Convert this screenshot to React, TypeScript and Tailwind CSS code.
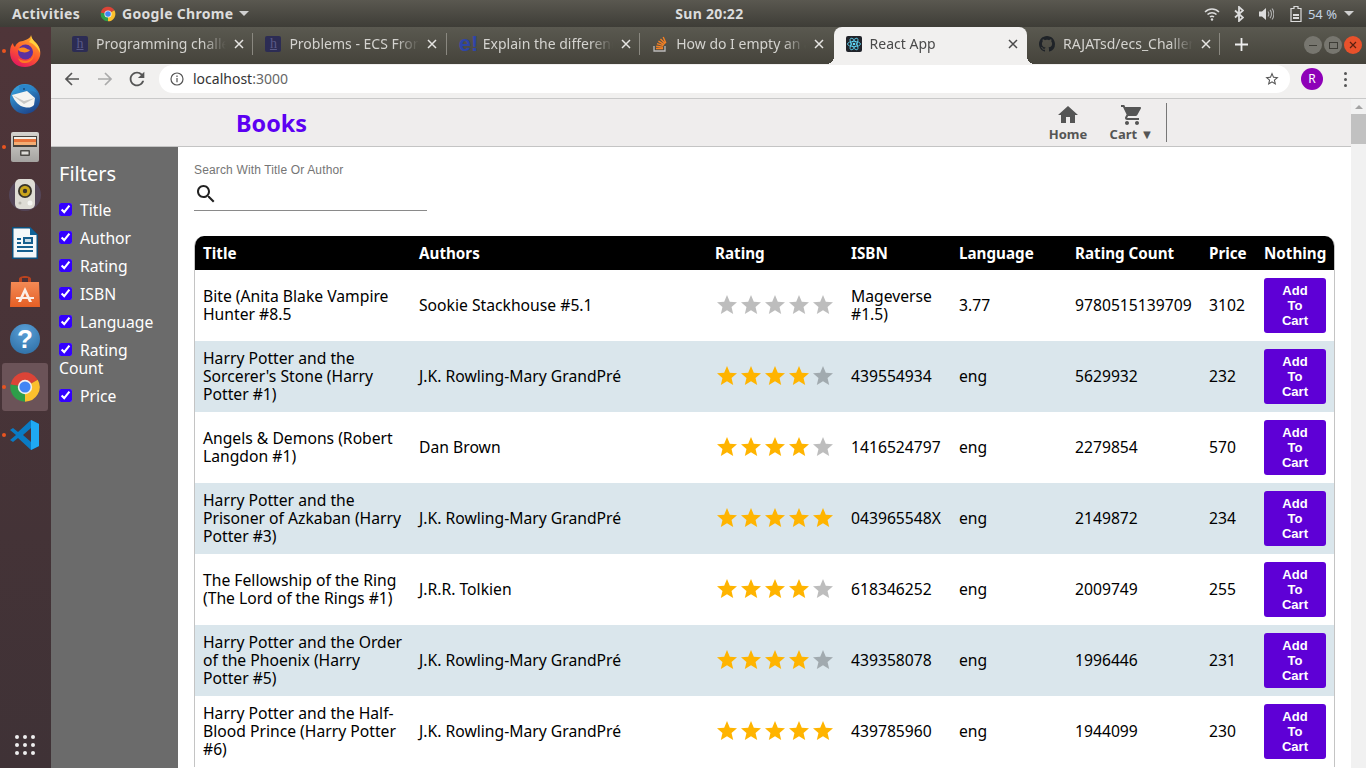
import type { ReactNode } from "react";

const STAR = "M12 17.27L18.18 21l-1.64-7.03L22 9.24l-7.19-.61L12 2 9.19 8.63 2 9.24l5.46 4.73L5.82 21z";
const COLS = "grid grid-cols-[216px_296px_136px_108px_116px_134px_55px_78px]";

const books = [
  { title: "Bite (Anita Blake Vampire Hunter #8.5", authors: "Sookie Stackhouse #5.1", stars: 0, isbn: "Mageverse #1.5)", lang: "3.77", count: "9780515139709", price: "3102" },
  { title: "Harry Potter and the Sorcerer's Stone (Harry Potter #1)", authors: "J.K. Rowling-Mary GrandPré", stars: 4, isbn: "439554934", lang: "eng", count: "5629932", price: "232" },
  { title: "Angels & Demons (Robert Langdon #1)", authors: "Dan Brown", stars: 4, isbn: "1416524797", lang: "eng", count: "2279854", price: "570" },
  { title: "Harry Potter and the Prisoner of Azkaban (Harry Potter #3)", authors: "J.K. Rowling-Mary GrandPré", stars: 5, isbn: "043965548X", lang: "eng", count: "2149872", price: "234" },
  { title: "The Fellowship of the Ring (The Lord of the Rings #1)", authors: "J.R.R. Tolkien", stars: 4, isbn: "618346252", lang: "eng", count: "2009749", price: "255" },
  { title: "Harry Potter and the Order of the Phoenix (Harry Potter #5)", authors: "J.K. Rowling-Mary GrandPré", stars: 4, isbn: "439358078", lang: "eng", count: "1996446", price: "231" },
  { title: "Harry Potter and the Half-Blood Prince (Harry Potter #6)", authors: "J.K. Rowling-Mary GrandPré", stars: 5, isbn: "439785960", lang: "eng", count: "1944099", price: "230" },
];

const filters = ["Title", "Author", "Rating", "ISBN", "Language", "Rating Count", "Price"];
const headers = ["Title", "Authors", "Rating", "ISBN", "Language", "Rating Count", "Price", "Nothing"];

// ── Logos ────────────────────────────────────────────────────────────

function ChromeLogo({ size }: { size: number }) {
  return (
    <svg width={size} height={size} viewBox="0 0 24 24">
      <path d="M12 12L1.17 10.09A11 11 0 0 1 21.53 6.5z" fill="#db4437" />
      <path d="M12 12L21.53 6.5A11 11 0 0 1 12 23z" fill="#fbc02d" />
      <path d="M12 12L12 23A11 11 0 0 1 1.17 10.09z" fill="#2e9e49" />
      <circle cx="12" cy="12" r="5.4" fill="#f1f1f1" />
      <circle cx="12" cy="12" r="4.2" fill="#4285f4" />
    </svg>
  );
}

function Firefox() {
  return (
    <svg width="32" height="32" viewBox="0 0 32 32">
      <defs>
        <linearGradient id="ffBody" x1="0.8" y1="0" x2="0.3" y2="1">
          <stop offset="0" stopColor="#ffb52e" />
          <stop offset="0.55" stopColor="#ff5a2c" />
          <stop offset="1" stopColor="#e3175f" />
        </linearGradient>
      </defs>
      <path d="M22 0c0 3 2 5 5 8 4 4 5 9 4 13-2 7-8 11-15 11C7 32 1 26 1 17c0-4 1-7 3-9 0 2 1 3 2 4 1-3 4-6 8-6 3-1 8-3 8-6z" fill="url(#ffBody)" />
      <path d="M22 0c0 3 2 5 5 8 3 3 4 7 4 10-2-5-6-9-11-11 2-2 2-4 2-7z" fill="#ffd23d" />
      <circle cx="16.5" cy="17" r="7.5" fill="#5d2fa0" />
      <path d="M9 14c3-2 7-2 9 0l3 1c-1 2-5 3-8 2-2 0-3-1-4-3z" fill="#ff8a1f" />
      <path d="M9 23c3 3 9 4 13 1 2-2 3-4 3-7 1 6-4 12-10 11-3 0-5-2-6-5z" fill="#ff7a22" />
    </svg>
  );
}

function Thunderbird() {
  return (
    <svg width="32" height="32" viewBox="0 0 32 32">
      <defs>
        <linearGradient id="tbBody" x1="0.2" y1="0" x2="0.8" y2="1">
          <stop offset="0" stopColor="#38a4e0" />
          <stop offset="1" stopColor="#1b3f86" />
        </linearGradient>
      </defs>
      <circle cx="16" cy="16" r="15" fill="url(#tbBody)" />
      <path d="M10 3c6-3 14 0 18 7-5-3-10-3-15-1-2 0-3-3-3-6z" fill="#2a85c9" />
      <path d="M3 12l15-4 8 7-1 7c-3 3-6 3-10 2-5-1-9-5-12-12z" fill="#f4f4f2" />
      <path d="M3 12l12 6 11-3-11 6z" fill="#c8c8c6" />
      <circle cx="15" cy="6" r="0.8" fill="#10203c" />
    </svg>
  );
}

function Files() {
  return (
    <svg width="28" height="30" viewBox="0 0 28 30">
      <defs>
        <linearGradient id="fileBox" x1="0" y1="0" x2="0" y2="1">
          <stop offset="0" stopColor="#d5d3cf" />
          <stop offset="1" stopColor="#a5a3a0" />
        </linearGradient>
      </defs>
      <rect x="0" y="0" width="28" height="30" rx="2" fill="url(#fileBox)" />
      <rect x="2" y="4" width="24" height="11" fill="#46423d" />
      <rect x="3" y="5" width="22" height="2" fill="#f2efe8" />
      <rect x="3" y="7" width="22" height="3" fill="#e7733a" />
      <rect x="3" y="10" width="22" height="3" fill="#f3ad74" />
      <rect x="9" y="18" width="10" height="6" rx="1" fill="#4e4b46" />
      <rect x="10.5" y="19.5" width="7" height="3" fill="#dddbd6" />
    </svg>
  );
}

function Rhythmbox() {
  return (
    <svg width="34" height="34" viewBox="0 0 34 34">
      <circle cx="17" cy="17" r="16" fill="#5f5a80" opacity="0.45" />
      <rect x="7" y="1" width="20" height="30" rx="5" fill="#dedcd5" />
      <circle cx="17" cy="13" r="7" fill="#38342c" />
      <circle cx="17" cy="13" r="5.2" fill="#c9a51c" />
      <circle cx="17" cy="13" r="2.2" fill="#38342c" />
      <circle cx="22" cy="25" r="2.5" fill="#f5f5f2" />
      <circle cx="12" cy="25" r="1.5" fill="#b8b6ae" />
    </svg>
  );
}

function Writer() {
  return (
    <svg width="26" height="32" viewBox="0 0 26 32">
      <path d="M0 0h18l8 8v24H0z" fill="#0b4f7c" />
      <path d="M1.5 1.5h16l7 7v22h-23z" fill="#f4f7f9" />
      <path d="M18 0l8 8h-8z" fill="#0f6298" />
      <path d="M5 11h4v2H5zM5 15h4v2H5zM5 19h16v2H5zM5 23h16v2H5z" fill="#155f8f" />
      <rect x="11" y="10" width="10" height="7" fill="#155f8f" />
      <rect x="13" y="12" width="6" height="3" fill="#c9dbe6" />
    </svg>
  );
}

function Software() {
  return (
    <svg width="30" height="32" viewBox="0 0 30 32">
      <defs>
        <linearGradient id="bag" x1="0" y1="0" x2="0" y2="1">
          <stop offset="0" stopColor="#f38a55" />
          <stop offset="1" stopColor="#e55f25" />
        </linearGradient>
      </defs>
      <path d="M9 8V4c0-4 12-4 12 0v4" fill="#b9431f" />
      <rect x="12" y="3" width="6" height="5" fill="#4a3238" />
      <path d="M1 7h28l1 25H0z" fill="url(#bag)" />
      <path d="M15 12l7 15h-3l-4-9-4 9H8z" fill="#fbeee6" />
      <rect x="6" y="22" width="18" height="2" fill="#fbeee6" />
    </svg>
  );
}

function Help() {
  return (
    <div className="flex h-[30px] w-[30px] items-center justify-center rounded-full bg-[radial-gradient(circle_at_50%_25%,#5aa0d8,#2a6aa0)] font-['Liberation_Sans',sans-serif] text-[26px] leading-none font-bold text-white">
      ?
    </div>
  );
}

function VSCode() {
  return (
    <svg width="30" height="32" viewBox="0 0 30 32">
      <path d="M21 1l8 4v22l-8 4L8 19l-5 4-3-2 6-5-6-5 3-2 5 4z" fill="#0a7bc4" />
      <path d="M21 9l-8 7 8 7z" fill="#4a3238" />
      <path d="M21 1l8 4v22l-8 4z" fill="#1fa9f2" />
    </svg>
  );
}

function ReactFavicon() {
  return (
    <svg width="16" height="16" viewBox="0 0 16 16">
      <rect width="16" height="16" rx="2" fill="#20232a" />
      <g fill="none" stroke="#61dafb" strokeWidth="0.8">
        <ellipse cx="8" cy="8" rx="6.5" ry="2.6" />
        <ellipse cx="8" cy="8" rx="6.5" ry="2.6" transform="rotate(60 8 8)" />
        <ellipse cx="8" cy="8" rx="6.5" ry="2.6" transform="rotate(120 8 8)" />
      </g>
      <circle cx="8" cy="8" r="1.3" fill="#61dafb" />
    </svg>
  );
}

function GithubFavicon() {
  return (
    <svg width="16" height="16" viewBox="0 0 16 16" fill="#1f2328">
      <path d="M8 0C3.58 0 0 3.58 0 8c0 3.54 2.29 6.53 5.47 7.59.4.07.55-.17.55-.38 0-.19-.01-.82-.01-1.49-2.01.37-2.53-.49-2.69-.94-.09-.23-.48-.94-.82-1.13-.28-.15-.68-.52-.01-.53.63-.01 1.08.58 1.23.82.72 1.21 1.87.87 2.33.66.07-.52.28-.87.51-1.07-1.78-.2-3.64-.89-3.64-3.95 0-.87.31-1.59.82-2.15-.08-.2-.36-1.02.08-2.12 0 0 .67-.21 2.2.82.64-.18 1.32-.27 2-.27s1.36.09 2 .27c1.53-1.04 2.2-.82 2.2-.82.44 1.1.16 1.92.08 2.12.51.56.82 1.27.82 2.15 0 3.07-1.87 3.75-3.65 3.95.29.25.54.73.54 1.48 0 1.07-.01 1.93-.01 2.2 0 .21.15.46.55.38A8.01 8.01 0 0 0 16 8c0-4.42-3.58-8-8-8z" />
    </svg>
  );
}

function StackFavicon() {
  return (
    <svg width="16" height="16" viewBox="0 0 16 16">
      <path d="M2 10v5h11v-5" fill="none" stroke="#bcbbbb" strokeWidth="1.3" />
      <path d="M4 12.5h7M4.2 10.2l6.8.9M5 7.7l6.5 2M6.4 5.2l5.8 3.4M8.5 3l4.8 4.8M11.2 1l2.6 6" fill="none" stroke="#f48024" strokeWidth="1.4" />
    </svg>
  );
}

function HackerFavicon() {
  return (
    <div className="flex h-4 w-4 items-center justify-center rounded-[2px] bg-[#2c2c54] font-['Liberation_Serif',serif] text-[14px] leading-none text-[#5a5a88] underline">
      h
    </div>
  );
}

function EduFavicon() {
  return <div className="w-4 font-['Liberation_Sans',sans-serif] text-[22px] leading-none font-bold whitespace-nowrap text-[#2e45a8]">e!</div>;
}

// ── Desktop chrome ───────────────────────────────────────────────────

function TopBar() {
  return (
    <div className="flex h-[27px] shrink-0 items-center bg-gradient-to-b from-[#5a5850] to-[#3e3d37] text-[14px] font-bold text-[#dcdcdc]">
      <span className="ml-[12px] w-[88px] tracking-[0.3px]">Activities</span>
      <ChromeLogo size={16} />
      <span className="ml-[6px] tracking-[0.3px]">Google Chrome</span>
      <span className="ml-[6px] h-0 w-0 border-x-[5px] border-t-[5px] border-x-transparent border-t-[#d0d0d0]" />
      <span className="ml-[420px] w-[80px] text-center tracking-[0.3px]">Sun 20:22</span>
      <div className="ml-auto flex items-center text-[13px]">
        <svg width="16" height="14" viewBox="0 0 16 14" fill="none" stroke="#dcdcdc" strokeWidth="1.5">
          <path d="M1 5c4-4 10-4 14 0M3.5 7.5c2.5-2.5 6.5-2.5 9 0M6 10c1-1 3-1 4 0" />
          <circle cx="8" cy="12.5" r="1.2" fill="#dcdcdc" stroke="none" />
        </svg>
        <svg className="ml-[14px]" width="10" height="16" viewBox="0 0 10 16" fill="none" stroke="#dcdcdc" strokeWidth="1.8">
          <path d="M1 4.5l8 7-4 3.5V1l4 3.5-8 7" />
        </svg>
        <svg className="ml-[15px]" width="15" height="14" viewBox="0 0 15 14">
          <path d="M0 4.5h3L7 1v12L3 9.5H0z" fill="#dcdcdc" />
          <path d="M9 4.5c1 1.5 1 3.5 0 5M11 3c2 2 2 6 0 8M13 1.5c2.5 3 2.5 8 0 11" fill="none" stroke="#b0b0b0" strokeWidth="1.1" />
        </svg>
        <svg className="ml-[16px]" width="12" height="16" viewBox="0 0 12 16">
          <path d="M4 0.5h4v2h3v13H1v-13h3z" fill="none" stroke="#dcdcdc" strokeWidth="1.2" />
          <path d="M3 8h6v2H3zM3 11h6v2H3z" fill="#dcdcdc" />
        </svg>
        <span className="ml-[6px] font-normal text-[#c4d4e4]">54 %</span>
        <span className="mr-[12px] ml-[7px] h-0 w-0 border-x-[5px] border-t-[5px] border-x-transparent border-t-[#d0d0d0]" />
      </div>
    </div>
  );
}

function Dock() {
  const items: { icon: ReactNode; dot?: boolean; active?: boolean }[] = [
    { icon: <Firefox />, dot: true },
    { icon: <Thunderbird /> },
    { icon: <Files />, dot: true },
    { icon: <Rhythmbox /> },
    { icon: <Writer /> },
    { icon: <Software /> },
    { icon: <Help /> },
    { icon: <ChromeLogo size={32} />, dot: true, active: true },
    { icon: <VSCode />, dot: true },
  ];
  return (
    <div className="flex w-[51px] shrink-0 flex-col bg-gradient-to-b from-[#4f3539] to-[#3f3236]">
      {items.map((item, i) => (
        <div key={i} className={`relative mx-[2px] flex h-12 w-[46px] items-center justify-center rounded-[3px] ${item.active ? "bg-[#6b5358]" : ""}`}>
          {item.dot && <span className="absolute top-[22px] left-0 h-1 w-1 rounded-full bg-[#e95420]" />}
          {item.icon}
        </div>
      ))}
      <div className="mt-auto mb-[13px] ml-[15px] grid w-5 grid-cols-3 gap-x-1 gap-y-1">
        {Array.from({ length: 9 }).map((_, i) => (
          <span key={i} className="h-1 w-1 rounded-full bg-[#eeeeee]" />
        ))}
      </div>
    </div>
  );
}

function Tab({ icon, label, active, sep }: { icon: ReactNode; label: string; active?: boolean; sep?: boolean }) {
  return (
    <div className={`relative flex h-[37px] w-[193.4px] shrink-0 items-center pb-[3px] pl-[12px] text-[14px] ${active ? "rounded-t-[8px] bg-[#f1f0ef] text-[#4a4a4a]" : "text-[#d4d3cf]"}`}>
      {active && (
        <>
          <span className="absolute bottom-0 -left-[8px] h-2 w-2 bg-[radial-gradient(circle_at_0_0,transparent_8px,#f1f0ef_8px)]" />
          <span className="absolute -right-[8px] bottom-0 h-2 w-2 bg-[radial-gradient(circle_at_100%_0,transparent_8px,#f1f0ef_8px)]" />
        </>
      )}
      <span className="flex w-4 shrink-0 justify-center">{icon}</span>
      <span className="ml-2 w-[130px] overflow-hidden whitespace-nowrap [mask-image:linear-gradient(to_right,black_82%,transparent)]">{label}</span>
      <svg className="ml-[8px]" width="10" height="10" viewBox="0 0 10 10" stroke={active ? "#4a4a4a" : "#e6e5e2"} strokeWidth="1.5">
        <path d="M1 1l8 8M9 1l-8 8" />
      </svg>
      {sep && <span className="absolute top-[6px] right-0 h-[22px] w-px bg-[#8a8880]" />}
    </div>
  );
}

function TabStrip() {
  return (
    <div className="flex h-[37px] shrink-0 items-end bg-gradient-to-b from-[#5a5950] to-[#45433b] pl-[9px]">
      <Tab icon={<HackerFavicon />} label="Programming challenges" sep />
      <Tab icon={<HackerFavicon />} label="Problems - ECS Frontend" sep />
      <Tab icon={<EduFavicon />} label="Explain the difference" sep />
      <Tab icon={<StackFavicon />} label="How do I empty an array" />
      <Tab icon={<ReactFavicon />} label="React App" active />
      <Tab icon={<GithubFavicon />} label="RAJATsd/ecs_Challenge" sep />
      <svg className="mb-[13px] ml-[15px]" width="13" height="13" viewBox="0 0 13 13" stroke="#eeeeee" strokeWidth="1.8">
        <path d="M6.5 0v13M0 6.5h13" />
      </svg>
      <div className="mb-[10px] ml-[56px] flex gap-[2px]">
        <span className="flex h-[18px] w-[18px] items-center justify-center rounded-full bg-[#77766f]"><span className="h-px w-2 bg-[#3d3c36]" /></span>
        <span className="flex h-[18px] w-[18px] items-center justify-center rounded-full bg-[#77766f]"><span className="h-[7px] w-[9px] border border-[#3d3c36]" /></span>
        <span className="flex h-[18px] w-[18px] items-center justify-center rounded-full bg-[#e8512b]">
          <svg width="8" height="8" viewBox="0 0 8 8" stroke="#5a2010" strokeWidth="1.2"><path d="M1 1l6 6M7 1L1 7" /></svg>
        </span>
      </div>
    </div>
  );
}

function Toolbar() {
  return (
    <div className="flex h-[35px] shrink-0 items-center border-b border-[#c9c9c9] bg-[#f1f0ef] pb-1">
      <svg className="ml-[13px]" width="16" height="16" viewBox="0 0 16 16" fill="none" stroke="#555" strokeWidth="1.7">
        <path d="M15 8H2M8 2L2 8l6 6" />
      </svg>
      <svg className="ml-[17px]" width="16" height="16" viewBox="0 0 16 16" fill="none" stroke="#aaa" strokeWidth="1.7">
        <path d="M1 8h13M8 2l6 6-6 6" />
      </svg>
      <svg className="ml-[13px]" width="22" height="22" viewBox="0 0 24 24" fill="#555">
        <path d="M17.65 6.35A7.958 7.958 0 0 0 12 4c-4.42 0-7.99 3.58-7.99 8s3.57 8 7.99 8c3.73 0 6.84-2.55 7.73-6h-2.08A5.99 5.99 0 0 1 12 18c-3.31 0-6-2.69-6-6s2.69-6 6-6c1.66 0 3.14.69 4.22 1.78L13 11h7V4l-2.35 2.35z" />
      </svg>
      <div className="ml-[11px] flex h-[28px] w-[1131px] items-center rounded-full bg-white pl-[11px]">
        <svg width="14" height="14" viewBox="0 0 14 14" fill="none" stroke="#555" strokeWidth="1.2">
          <circle cx="7" cy="7" r="6" />
          <path d="M7 6v4.2M7 3.6v1.3" />
        </svg>
        <span className="ml-[9px] text-[14px] text-[#333]">localhost<span className="text-[#666]">:3000</span></span>
        <svg className="mr-[10px] ml-auto" width="16" height="16" viewBox="0 0 24 24" fill="#555">
          <path d="M22 9.24l-7.19-.62L12 2 9.19 8.63 2 9.24l5.46 4.73L5.82 21 12 17.27 18.18 21l-1.63-7.03L22 9.24zM12 15.4l-3.76 2.27 1-4.28-3.32-2.88 4.38-.38L12 6.1l1.71 4.04 4.38.38-3.32 2.88 1 4.28L12 15.4z" />
        </svg>
      </div>
      <span className="ml-[11px] flex h-[22px] w-[22px] items-center justify-center rounded-full bg-[#8e00b8] text-[12px] text-white">R</span>
      <span className="ml-[21px] flex flex-col gap-[3px]">
        <span className="h-[3px] w-[3px] rounded-full bg-[#555]" />
        <span className="h-[3px] w-[3px] rounded-full bg-[#555]" />
        <span className="h-[3px] w-[3px] rounded-full bg-[#555]" />
      </span>
    </div>
  );
}

// ── Page ─────────────────────────────────────────────────────────────

function Header() {
  return (
    <div className="flex h-12 shrink-0 items-center border-b border-[#c4c4c4] bg-[#efeded] pr-[184px] pl-[185px]">
      <span className="text-[23.4px] font-bold text-[#5c00f2]">Books</span>
      <div className="ml-auto flex h-[39px] items-center border-r border-[#777] pr-[14px] text-[13px] font-bold text-[#555]">
        <div className="flex w-[40px] flex-col items-center">
          <svg width="24" height="24" viewBox="0 0 24 24" fill="#555"><path d="M10 20v-6h4v6h5v-8h3L12 3 2 12h3v8z" /></svg>
          <span className="leading-[15px]">Home</span>
        </div>
        <div className="ml-[23px] flex w-[41px] flex-col items-center">
          <svg width="24" height="24" viewBox="0 0 24 24" fill="#555">
            <path d="M7 18c-1.1 0-1.99.9-1.99 2S5.9 22 7 22s2-.9 2-2-.9-2-2-2zM1 2v2h2l3.6 7.59-1.35 2.45c-.16.28-.25.61-.25.96 0 1.1.9 2 2 2h12v-2H7.42c-.14 0-.25-.11-.25-.25l.03-.12.9-1.63h7.45c.75 0 1.41-.41 1.75-1.03l3.58-6.49c.08-.14.12-.31.12-.48 0-.55-.45-1-1-1H5.21l-.94-2H1zm16 16c-1.1 0-1.99.9-1.99 2s.89 2 1.99 2 2-.9 2-2-.9-2-2-2z" />
          </svg>
          <span className="leading-[15px] whitespace-nowrap">Cart ▼</span>
        </div>
      </div>
    </div>
  );
}

function Sidebar() {
  return (
    <div className="w-[127px] shrink-0 bg-[#6b6b6b] px-2 pt-[15px] text-white">
      <div className="mb-[15px] text-[20px] leading-[24px] font-normal">Filters</div>
      {filters.map((f) => (
        <label key={f} className="mb-[10px] block leading-[18px]">
          <input type="checkbox" checked readOnly className="mr-2 accent-[#3300ff]" />
          {f}
        </label>
      ))}
    </div>
  );
}

function Stars({ count }: { count: number }) {
  return (
    <div className="flex">
      {[0, 1, 2, 3, 4].map((i) => (
        <svg key={i} width="24" height="24" viewBox="0 0 24 24" fill={i < count ? "#ffb400" : "rgba(0,0,0,0.26)"}>
          <path d={STAR} />
        </svg>
      ))}
    </div>
  );
}

function BookTable() {
  return (
    <div className="w-[1141px] overflow-hidden rounded-t-[10px] border-x border-[#c4c4c4]">
      <div className={`${COLS} h-[34px] items-center bg-black text-[15.2px] font-bold text-white`}>
        {headers.map((h) => (
          <div key={h} className="pl-2 whitespace-nowrap">{h}</div>
        ))}
      </div>
      {books.map((b, i) => (
        <div key={b.title} className={`${COLS} h-[71px] items-center pb-[2px] text-black ${i % 2 === 1 ? "bg-[#dae6ec]" : "bg-white"}`}>
          <div className="px-2">{b.title}</div>
          <div className="px-2">{b.authors}</div>
          <div className="px-2"><Stars count={b.stars} /></div>
          <div className="px-2">{b.isbn}</div>
          <div className="px-2">{b.lang}</div>
          <div className="pl-2">{b.count}</div>
          <div className="pl-2">{b.price}</div>
          <div className="pt-[2px] pl-2">
            <button className="block h-[55px] w-[62px] rounded-[3px] bg-[#5e00d6] px-3 font-['Liberation_Sans',sans-serif] text-[13px] leading-[15px] font-bold text-white">
              Add To Cart
            </button>
          </div>
        </div>
      ))}
    </div>
  );
}

function Scrollbar() {
  return (
    <div className="flex w-[15px] shrink-0 flex-col items-center bg-[#f1f1f1]">
      <span className="mt-[6px] h-0 w-0 border-x-[4px] border-b-[4px] border-x-transparent border-b-[#a3a3a3]" />
      <span className="mt-[5px] h-[30px] w-full bg-[#c1c1c1]" />
    </div>
  );
}

export default function App() {
  return (
    <div className="flex h-screen flex-col overflow-hidden font-['Noto_Sans',sans-serif] text-[15.7px] leading-[18px]">
      <TopBar />
      <div className="flex min-h-0 flex-1">
        <Dock />
        <div className="flex min-w-0 flex-1 flex-col">
          <TabStrip />
          <Toolbar />
          <div className="flex min-h-0 flex-1">
            <div className="flex min-w-0 flex-1 flex-col">
              <Header />
              <div className="flex min-h-0 flex-1">
                <Sidebar />
                <div className="min-w-0 flex-1 overflow-hidden bg-white pt-[16px] pl-[16px]">
                  <div className="font-['Liberation_Sans',sans-serif] text-[12px] leading-[14px] tracking-[0.15px] text-[#757575]">Search With Title Or Author</div>
                  <div className="flex h-[34px] w-[233px] items-center border-b border-[#8a8a8a] pt-[1px]">
                    <svg className="h-6 w-6" viewBox="0 0 24 24" fill="#222">
                      <path d="M15.5 14h-.79l-.28-.27C15.41 12.59 16 11.11 16 9.5 16 5.91 13.09 3 9.5 3S3 5.91 3 9.5 5.91 16 9.5 16c1.61 0 3.09-.59 4.23-1.57l.27.28v.79l5 4.99L20.49 19l-4.99-5zm-6 0C7.01 14 5 11.99 5 9.5S7.01 5 9.5 5 14 7.01 14 9.5 11.99 14 9.5 14z" />
                    </svg>
                  </div>
                  <div className="mt-[25px]"><BookTable /></div>
                </div>
              </div>
            </div>
            <Scrollbar />
          </div>
        </div>
      </div>
    </div>
  );
}
